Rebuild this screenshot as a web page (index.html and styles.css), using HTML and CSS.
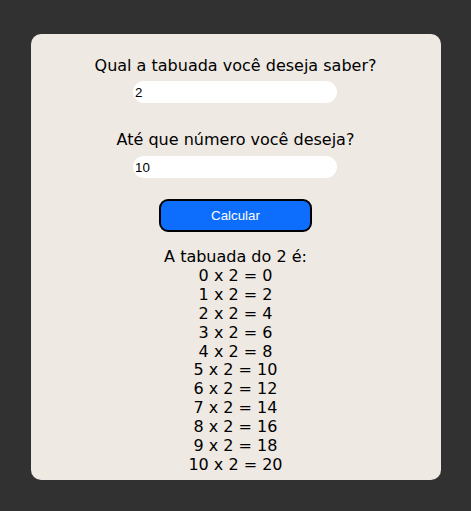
FILE: index.html
```html
<!DOCTYPE html>
<html lang="pt-BR">
<head>
<meta charset="utf-8">
<title>Tabuada</title>
<link rel="stylesheet" href="styles.css">
</head>
<body>
<main class="card">
  <label class="label label-first" for="num">Qual a tabuada você deseja saber?</label>
  <input class="field field-first" id="num" type="text" value="2">
  <label class="label" for="lim">Até que número você deseja?</label>
  <input class="field" id="lim" type="text" value="10">
  <button class="btn" type="button">Calcular</button>
  <div class="result">
    <div>A tabuada do 2 é:</div>
    <div>0 x 2 = 0</div>
    <div>1 x 2 = 2</div>
    <div>2 x 2 = 4</div>
    <div>3 x 2 = 6</div>
    <div>4 x 2 = 8</div>
    <div>5 x 2 = 10</div>
    <div>6 x 2 = 12</div>
    <div>7 x 2 = 14</div>
    <div>8 x 2 = 16</div>
    <div>9 x 2 = 18</div>
    <div>10 x 2 = 20</div>
  </div>
</main>
</body>
</html>
```

FILE: styles.css
```css
html, body {
  margin: 0;
  padding: 0;
}
body {
  background: #313131;
  min-height: 511px;
  padding-top: 34px;
  box-sizing: border-box;
  font-family: "DejaVu Sans", Verdana, sans-serif;
  font-size: 16px;
  color: #000;
}
.card {
  width: 410px;
  margin: 0 auto;
  background: #eee9e3;
  border-radius: 10px;
  padding: 22px 0 5px;
  display: flex;
  flex-direction: column;
  align-items: center;
  box-sizing: border-box;
}
.label {
  display: block;
  line-height: 19px;
  margin: 27px 0 7px;
  text-align: center;
}
.label-first {
  margin-top: 0;
  margin-bottom: 6px;
}
.field {
  width: 204px;
  height: 22px;
  box-sizing: border-box;
  border: none;
  border-radius: 11px;
  background: #fff;
  padding: 0 2px;
  font-family: "Liberation Sans", Arial, sans-serif;
  font-size: 13.33px;
  color: #000;
  outline: none;
  margin-left: -1px;
}
.btn {
  margin-top: 21px;
  width: 153px;
  height: 33px;
  box-sizing: border-box;
  background: #0d6efd;
  border: 2px solid #000;
  border-radius: 9px;
  color: #fff;
  font-family: "Liberation Sans", Arial, sans-serif;
  font-size: 13.33px;
  cursor: pointer;
}
.result {
  margin-top: 16px;
  text-align: center;
  line-height: 18.9px;
}
```
